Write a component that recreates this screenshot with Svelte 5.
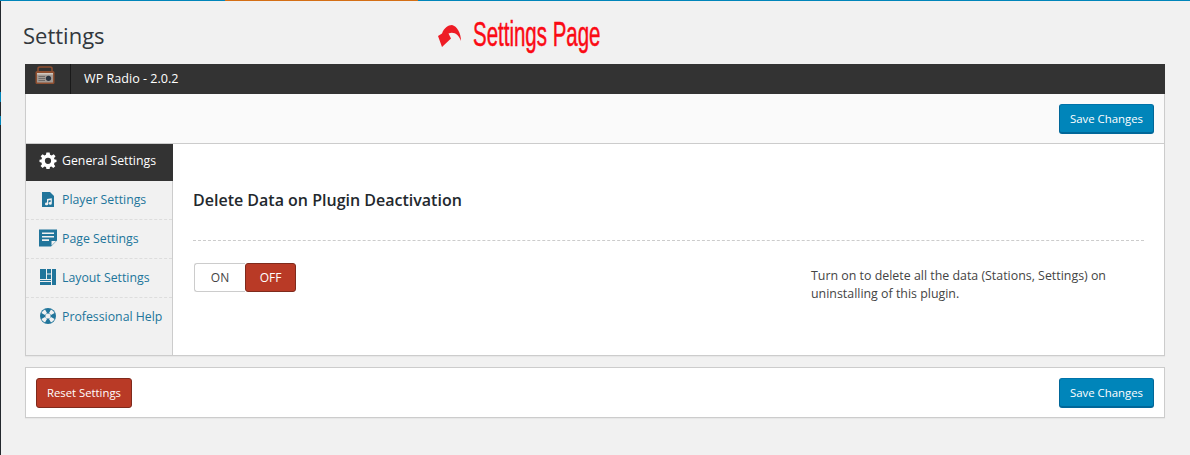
<script>
  const tabs = [
    { label: "General Settings", icon: "gear", active: true },
    { label: "Player Settings", icon: "music" },
    { label: "Page Settings", icon: "page" },
    { label: "Layout Settings", icon: "layout" },
    { label: "Professional Help", icon: "help" },
  ];
</script>

<div class="topline">
  <span class="blue1"></span><span class="orange"></span><span class="blue2"></span>
</div>

<div class="shell">
  <div class="edge">
    <span class="tick1"></span>
    <span class="tick2"></span>
  </div>

  <div class="wrap">
    <div class="titlerow">
      <h1>Settings</h1>
      <svg class="arrow" width="26" height="24" viewBox="0 0 26 24">
        <path fill="#ee1c25" d="M1 12 L5 9.5 C7 4 11 1 15 1 C20 2 24 9 24 17 C22 11 17 7 11.5 9.5 L14 14.5 L5 23 Z" />
      </svg>
      <span class="note">Settings Page</span>
    </div>

    <div class="panel">
      <div class="header">
        <div class="logo">
          <svg width="20" height="19" viewBox="0 0 20 19">
            <path fill="none" stroke="#8f4f30" stroke-width="1.5" d="M3 5 V2.5 Q3 1 5 1 H15 Q17 1 17 2.5 V5" />
            <rect x="0.5" y="5" width="19" height="13" rx="1.5" fill="#8f4f30" />
            <rect x="2" y="7" width="16" height="9.5" fill="#a39a94" />
            <rect x="2" y="7" width="16" height="1.5" fill="#d0c8c0" />
            <circle cx="13.5" cy="12.3" r="2.6" fill="#2b3440" />
            <path stroke="#6e6a68" d="M3.5 10.5 H10 M3.5 12.5 H10 M3.5 14.5 H10" />
          </svg>
        </div>
        <div class="version">WP Radio - 2.0.2</div>
      </div>

      <div class="toolbar">
        <button class="btn blue">Save Changes</button>
      </div>

      <div class="body">
        <nav class="side">
          {#each tabs as t}
            <div class="tab" class:active={t.active}>
              <span class="ico">
                {#if t.icon === "gear"}
                  <svg width="18" height="17" viewBox="0 0 18 18">
                    <path fill="#fff" fill-rule="evenodd" d="M7.3 0.5 H10.7 L11.2 3 L12.9 3.7 L15 2.3 L17 4.6 L15.3 6.5 L16 8 L18 8.3 V10.7 L16 11.2 L15.3 12.9 L16.7 15 L14.6 17 L12.6 15.4 L11.1 16 L10.7 18 H7.3 L6.9 16 L5.2 15.4 L3.3 17 L1.1 14.9 L2.6 12.9 L2 11.2 L0 10.7 V8.3 L2 7.9 L2.7 6.3 L1.2 4.4 L3.3 2.3 L5.2 3.7 L6.8 3 Z M9 6 A3.3 3.3 0 1 0 9 12.6 A3.3 3.3 0 1 0 9 6 Z" />
                  </svg>
                {:else if t.icon === "music"}
                  <svg width="12" height="15" viewBox="0 0 12 15">
                    <path fill="#21759b" fill-rule="evenodd" d="M0 0 H8 L12 4 V15 H0 Z M5 7 V10.6 A1.6 1.4 0 1 0 6.2 12 V8.4 L8.6 8 V10 A1.6 1.4 0 1 0 9.8 11.4 V6.2 Z" />
                  </svg>
                {:else if t.icon === "page"}
                  <svg width="18" height="18" viewBox="0 0 18 17">
                    <path fill="#21759b" fill-rule="evenodd" d="M0 0 H18 V11 L12 17 H0 Z M3 3 V4.6 H15 V3 Z M3 6.4 V8 H15 V6.4 Z M3 9.8 V11.4 H10 V9.8 Z M12.5 16 L17 11.5 H12.5 Z" />
                  </svg>
                {:else if t.icon === "layout"}
                  <svg width="16" height="16" viewBox="0 0 16 16">
                    <path fill="#21759b" d="M0 0 H6 V10 H0 Z M7 0 H11 V4.5 H7 Z M7 5.5 H11 V10 H7 Z M12 0 H16 V16 H12 Z M0 11 H11 V12 H0 Z M0 13 H11 V16 H0 Z" />
                  </svg>
                {:else}
                  <svg width="16" height="16" viewBox="0 0 16 16">
                    <circle cx="8" cy="8" r="8" fill="#21759b" />
                    <circle cx="8" cy="8" r="2.6" fill="#f1f1f1" />
                    <path fill="#f1f1f1" d="M5 1.4 L7 5 L5 7 L1.4 5 Q2.5 2.5 5 1.4 Z M11 1.4 L9 5 L11 7 L14.6 5 Q13.5 2.5 11 1.4 Z M5 14.6 L7 11 L5 9 L1.4 11 Q2.5 13.5 5 14.6 Z M11 14.6 L9 11 L11 9 L14.6 11 Q13.5 13.5 11 14.6 Z" />
                  </svg>
                {/if}
              </span>
              <span>{t.label}</span>
            </div>
          {/each}
        </nav>

        <div class="content">
          <h3>Delete Data on Plugin Deactivation</h3>
          <div class="row">
            <div class="toggle">
              <span class="on">ON</span>
              <span class="off">OFF</span>
            </div>
            <p class="desc">Turn on to delete all the data (Stations, Settings) on uninstalling of this plugin.</p>
          </div>
        </div>
      </div>
    </div>

    <div class="footer">
      <button class="btn red">Reset Settings</button>
      <button class="btn blue">Save Changes</button>
    </div>
  </div>
</div>

<style>
  :global(body) {
    background: #f1f1f1;
    font-family: "Open Sans", sans-serif;
    font-size: 13px;
    color: #444;
  }

  .topline {
    display: flex;
    height: 1px;
  }
  .blue1 { width: 225px; background: #0085ba; }
  .orange { width: 193px; background: #d46f15; }
  .blue2 { flex: 1; background: #0085ba; }

  .shell {
    display: flex;
    height: 454px;
    overflow: hidden;
  }

  .edge {
    width: 1px;
    background: #23282d;
    display: flex;
    flex-direction: column;
  }
  .tick1 { height: 10px; margin-top: 91px; background: #0085ba; }
  .tick2 { height: 9px; margin-top: 14px; background: #0085ba; }

  .wrap {
    flex: 1;
    padding: 0 25px 0 24px;
    min-width: 0;
  }

  .titlerow {
    display: flex;
    align-items: center;
    height: 63px;
  }
  h1 {
    margin: 0 0 0 -2px;
    width: 415px;
    font-size: 22px;
    font-weight: 400;
    color: #32373c;
    padding-top: 4px;
    box-sizing: border-box;
  }
  .arrow {
    margin: 6px 10px 0 -1px;
  }
  .note {
    font-family: "Liberation Sans", sans-serif;
    font-size: 35px;
    color: #fb0a14;
    display: inline-block;
    transform: scaleX(0.585);
    transform-origin: left center;
    white-space: nowrap;
    padding-top: 3px;
    -webkit-text-stroke: 0.5px #fb0a14;
  }

  .panel {
    border: 1px solid #ccc;
    border-top: 0;
    box-shadow: 0 1px 1px rgba(0, 0, 0, 0.04);
    background: #fff;
  }

  .header {
    display: flex;
    height: 30px;
    margin: 0 -1px;
    background: #333;
    color: #fff;
  }
  .logo {
    width: 46px;
    border-right: 1px solid #191919;
    padding: 2px 0 0 10px;
    box-sizing: border-box;
  }
  .version {
    padding-left: 13px;
    line-height: 30px;
    font-size: 12.6px;
    font-weight: 500;
  }

  .toolbar {
    display: flex;
    justify-content: flex-end;
    height: 39px;
    padding: 10px 10px 0 0;
    background: #fafafa;
    border-bottom: 1px solid #ccc;
  }

  .btn {
    height: 30px;
    padding: 0 10px;
    border-radius: 3px;
    font-family: inherit;
    font-size: 11.4px;
    color: #fff;
    cursor: pointer;
  }
  .blue {
    background: #0085ba;
    border: 1px solid #0073aa;
    border-bottom-width: 2px;
    border-color: #0073aa #006799 #006799;
  }
  .red {
    background: #b93a26;
    border: 1px solid #7f2a1c;
    font-size: 11.3px;
  }

  .body {
    display: flex;
    height: 211px;
  }

  .side {
    width: 147px;
    box-sizing: border-box;
    flex: none;
    background: #f1f1f1;
    border-right: 1px solid #ccc;
  }
  .tab {
    display: flex;
    align-items: center;
    height: 36px;
    padding-bottom: 2px;
    border-bottom: 1px dashed #ddd;
    color: #21759b;
    font-size: 12.3px;
    padding-left: 10px;
  }
  .tab:last-child {
    border-bottom: 0;
  }
  .tab.active {
    height: 33px;
    padding-bottom: 4px;
    background: #333;
    color: #fff;
    border-bottom: 0;
    margin-right: -1px;
    font-weight: 500;
  }
  .ico {
    width: 24px;
    display: flex;
    justify-content: center;
    margin-right: 2px;
    flex: none;
  }

  .content {
    flex: 1;
    padding: 0 20px;
  }
  h3 {
    margin: 0;
    height: 96px;
    line-height: 112px;
    border-bottom: 1px dashed #ccc;
    font-size: 16px;
    font-weight: 600;
    color: #23282d;
  }

  .row {
    display: flex;
    justify-content: space-between;
    padding-top: 22px;
  }
  .toggle {
    display: flex;
    height: 29px;
    margin-left: 1px;
    font-size: 12px;
    line-height: 27px;
    text-align: center;
  }
  .on {
    width: 51px;
    box-sizing: border-box;
    border: 1px solid #ccc;
    border-right: 0;
    border-radius: 3px 0 0 3px;
    background: #fff;
    color: #444;
  }
  .off {
    width: 51px;
    box-sizing: border-box;
    border: 1px solid #7f2a1c;
    border-radius: 3px;
    background: #b93a26;
    color: #fff;
  }
  .desc {
    margin: 4px 0 0;
    width: 333px;
    font-size: 12.4px;
    line-height: 18px;
    color: #444;
  }

  .footer {
    display: flex;
    justify-content: space-between;
    align-items: center;
    height: 49px;
    margin-top: 11px;
    padding: 0 10px;
    background: #fff;
    border: 1px solid #ccc;
    box-shadow: 0 1px 1px rgba(0, 0, 0, 0.04);
  }
</style>
